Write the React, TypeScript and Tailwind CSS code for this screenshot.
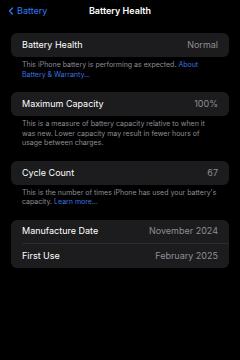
import { ChevronLeft } from "lucide-react";

function Row({ label, value, divider }: { label: string; value: string; divider?: boolean }) {
  return (
    <div className="pl-[11px]">
      <div className={`flex h-[24px] items-center justify-between pr-[11px] ${divider ? "border-b border-[#2c2c2e]" : ""}`}>
        <span className="text-[9px] text-white">{label}</span>
        <span className="text-[9px] text-[#8e8e93]">{value}</span>
      </div>
    </div>
  );
}

function Note({ children }: { children: React.ReactNode }) {
  return <p className="mt-[3px] px-[11px] text-[7px] leading-[9.5px] text-[#8e8e93]">{children}</p>;
}

export default function App() {
  return (
    <div className="h-[360px] w-[240px] overflow-hidden bg-black" style={{ fontFamily: "Inter, 'Liberation Sans', sans-serif" }}>
      <div className="relative flex h-[22px] items-center">
        <div className="flex items-center pl-[5px]">
          <ChevronLeft size={12} strokeWidth={2.5} className="text-[#2f7cf6]" />
          <span className="text-[9px] text-[#2f7cf6]">Battery</span>
        </div>
        <span className="absolute left-1/2 -translate-x-1/2 text-[9px] font-semibold text-white">Battery Health</span>
      </div>

      <div className="mx-[11px] mt-[11px] flex flex-col">
        <div className="rounded-[6px] bg-[#1c1c1e]">
          <Row label="Battery Health" value="Normal" />
        </div>
        <Note>
          This iPhone battery is performing as expected. <span className="text-[#3a74e0]">About Battery &amp; Warranty...</span>
        </Note>

        <div className="mt-[13px] rounded-[6px] bg-[#1c1c1e]">
          <Row label="Maximum Capacity" value="100%" />
        </div>
        <Note>
          This is a measure of battery capacity relative to when it was new. Lower capacity may result in fewer hours of usage between charges.
        </Note>

        <div className="mt-[13px] rounded-[6px] bg-[#1c1c1e]">
          <Row label="Cycle Count" value="67" />
        </div>
        <Note>
          This is the number of times iPhone has used your battery's capacity. <span className="text-[#3a74e0]">Learn more...</span>
        </Note>

        <div className="mt-[13px] rounded-[6px] bg-[#1c1c1e]">
          <Row label="Manufacture Date" value="November 2024" divider />
          <Row label="First Use" value="February 2025" />
        </div>
      </div>
    </div>
  );
}
